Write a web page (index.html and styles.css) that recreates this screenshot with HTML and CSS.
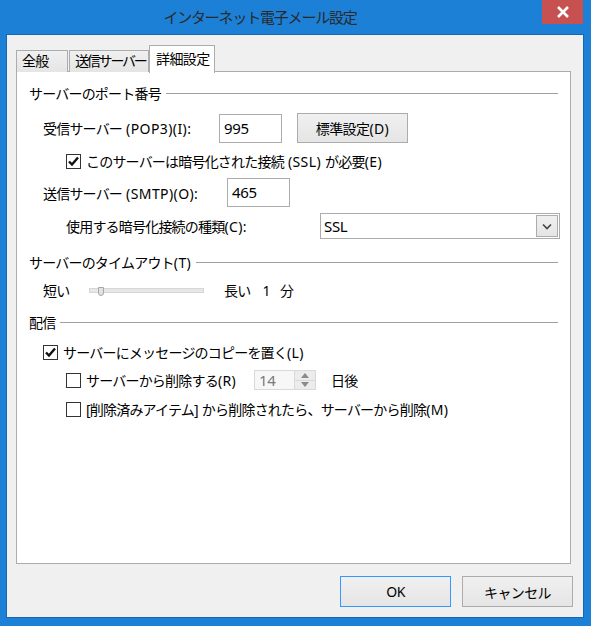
FILE: index.html
```html
<!DOCTYPE html>
<html lang="ja">
<head>
    <meta charset="UTF-8">
    <meta name="viewport" content="width=device-width, initial-scale=1.0">
    <title>インターネット電子メール設定</title>
    <link rel="stylesheet" href="styles.css">
</head>
<body>
    <div class="window">
        <div class="titlebar">
            <span class="title">インターネット電子メール設定</span>
            <span class="close">
                <svg width="14" height="12" viewBox="0 0 14 12"><path d="M2 1 L12 11 M12 1 L2 11" stroke="#fff" stroke-width="2.6"/></svg>
            </span>
        </div>
        <div class="client">
            <div class="tabs">
                <div class="tab tab-general">全般</div>
                <div class="tab tab-send">送信サーバー</div>
                <div class="tab tab-detail active">詳細設定</div>
            </div>
            <div class="panel">
                <div class="group-title g-port"><span>サーバーのポート番号</span></div>

                <div class="row r-pop">
                    <label class="lbl lbl-pop">受信サーバー<span class="en"> (POP3)(I):</span></label>
                    <div class="textbox tb-pop">995</div>
                    <button class="btn btn-default">標準設定<span class="en">(D)</span></button>
                </div>

                <div class="row r-ssl">
                    <span class="check checked">
                        <svg width="13" height="13" viewBox="0 0 13 13"><path d="M2 6.5 L5 9.5 L11 2.5" fill="none" stroke="#111" stroke-width="2.4"/></svg>
                    </span>
                    <span class="check-text">このサーバーは暗号化された接続<span class="en"> (SSL) </span>が必要<span class="en">(E)</span></span>
                </div>

                <div class="row r-smtp">
                    <label class="lbl lbl-smtp">送信サーバー<span class="en"> (SMTP)(O):</span></label>
                    <div class="textbox tb-smtp">465</div>
                </div>

                <div class="row r-enc">
                    <label class="lbl lbl-enc">使用する暗号化接続の種類<span class="en">(C):</span></label>
                    <div class="select">
                        <span class="select-value">SSL</span>
                        <span class="select-arrow">
                            <svg width="10" height="7" viewBox="0 0 10 7"><path d="M1 1.5 L5 5.5 L9 1.5" fill="none" stroke="#444" stroke-width="1.6"/></svg>
                        </span>
                    </div>
                </div>

                <div class="group-title g-timeout"><span>サーバーのタイムアウト<span class="en">(T)</span></span></div>

                <div class="row r-timeout">
                    <span class="lbl lbl-short">短い</span>
                    <div class="slider">
                        <span class="slider-thumb"></span>
                    </div>
                    <span class="lbl-long">長い</span>
                    <span class="lbl-min">1 分</span>
                </div>

                <div class="group-title g-deliver"><span>配信</span></div>

                <div class="row r-keep">
                    <span class="check checked">
                        <svg width="13" height="13" viewBox="0 0 13 13"><path d="M2 6.5 L5 9.5 L11 2.5" fill="none" stroke="#111" stroke-width="2.4"/></svg>
                    </span>
                    <span class="check-text">サーバーにメッセージのコピーを置く<span class="en">(L)</span></span>
                </div>

                <div class="row r-remove">
                    <span class="check"></span>
                    <span class="check-text lbl-remove">サーバーから削除する<span class="en">(R)</span></span>
                    <div class="spin">
                        <span class="spin-value">14</span>
                        <span class="spin-buttons">
                            <span class="spin-btn">
                                <svg width="8" height="5" viewBox="0 0 8 5"><path d="M0 5 L4 0 L8 5 Z" fill="#8a8a8a"/></svg>
                            </span>
                            <span class="spin-btn">
                                <svg width="8" height="5" viewBox="0 0 8 5"><path d="M0 0 L4 5 L8 0 Z" fill="#8a8a8a"/></svg>
                            </span>
                        </span>
                    </div>
                    <span class="lbl-days">日後</span>
                </div>

                <div class="row r-deleted">
                    <span class="check"></span>
                    <span class="check-text">[削除済みアイテム]<span class="en"> </span>から削除されたら、サーバーから削除<span class="en">(M)</span></span>
                </div>
            </div>
            <div class="footer">
                <button class="btn btn-dialog focused">OK</button>
                <button class="btn btn-dialog">キャンセル</button>
            </div>
        </div>
    </div>
</body>
</html>
```

FILE: styles.css
```css
* {
    box-sizing: border-box;
}

body {
    margin: 0;
    font-family: "Noto Sans", "Noto Sans CJK JP", sans-serif;
    font-size: 14px;
    letter-spacing: -0.8px;
    color: #000;
    background: #1b80d6;
}

.en {
    letter-spacing: 0.4px;
}

.window {
    width: 591px;
    height: 626px;
    padding: 0 7px 8px 6px;
    background: #1b80d6;
}

/* title bar */
.titlebar {
    position: relative;
    height: 34px;
    display: flex;
    justify-content: center;
    align-items: center;
    padding-right: 70px;
    padding-bottom: 1px;
}

.title {
    font-size: 15px;
    letter-spacing: -1.2px;
    color: #2a2a2a;
}

.close {
    position: absolute;
    top: 0;
    right: 1px;
    width: 41px;
    height: 24px;
    background: #c75050;
    display: flex;
    justify-content: center;
    align-items: center;
}

/* client area */
.client {
    height: 584px;
    background: #f0f0f0;
    border: 1px solid #1767b5;
    padding: 10px 10px 10px 9px;
}

.tabs {
    display: flex;
    align-items: flex-end;
    height: 27px;
}

.tab {
    height: 22px;
    border: 1px solid #acacac;
    border-bottom: none;
    background: linear-gradient(#f0f0f0, #e5e5e5);
    padding: 0 0 0 5px;
    line-height: 20px;
    white-space: nowrap;
    overflow: hidden;
    flex: none;
}

.tab-general {
    width: 52px;
    margin-right: 1px;
}

.tab-send {
    width: 80px;
    letter-spacing: -2.2px;
}

.tab-detail {
    width: 66px;
}

.tab.active {
    position: relative;
    z-index: 1;
    height: 28px;
    margin-bottom: -1px;
    background: #fff;
    padding-left: 6px;
    line-height: 26px;
    letter-spacing: -0.6px;
}

.panel {
    width: 555px;
    height: 493px;
    margin-top: -1px;
    background: #fff;
    border: 1px solid #acacac;
    padding: 11px 0 0 12px;
}

.group-title {
    display: flex;
    align-items: center;
    height: 20px;
    margin-right: 12px;
}

.group-title > span {
    white-space: nowrap;
}

.group-title::after {
    content: "";
    flex: 1;
    border-top: 1px solid #a0a0a0;
    margin-left: 5px;
}

.g-timeout {
    margin-top: 13px;
}

.g-deliver {
    margin-top: 11px;
}

.row {
    display: flex;
    align-items: center;
    white-space: nowrap;
}

.row > * {
    flex: none;
}

.r-pop {
    height: 30px;
    margin-top: 10px;
    padding-left: 14px;
}

.r-ssl {
    height: 22px;
    margin-top: 7px;
    padding-left: 37px;
}

.r-smtp {
    height: 29px;
    margin-top: 6px;
    padding-left: 14px;
}

.r-enc {
    height: 26px;
    margin-top: 6px;
    padding-left: 37px;
}

.r-timeout {
    height: 22px;
    margin-top: 7px;
    padding-left: 14px;
}

.r-keep {
    height: 22px;
    margin-top: 9px;
    padding-left: 14px;
}

.r-remove {
    height: 22px;
    margin-top: 6px;
    padding-left: 37px;
}

.r-deleted {
    height: 22px;
    margin-top: 7px;
    padding-left: 37px;
}

.lbl-pop {
    width: 176px;
}

.lbl-smtp {
    width: 184px;
}

.lbl-enc {
    width: 254px;
}

.textbox {
    width: 63px;
    height: 29px;
    border: 1px solid #acacac;
    background: #fff;
    padding-left: 4px;
    line-height: 26px;
    font-size: 15px;
    letter-spacing: -0.3px;
}

.btn {
    font-family: inherit;
    font-size: 14px;
    letter-spacing: -0.6px;
    color: #000;
    border: 1px solid #acacac;
    background: linear-gradient(#f0f0f0, #e5e5e5);
    padding: 0;
}

.btn-default {
    width: 111px;
    height: 30px;
    margin-left: 15px;
}

/* checkboxes */
.check {
    width: 15px;
    height: 15px;
    border: 1px solid #333;
    background: #fff;
    display: flex;
    justify-content: center;
    align-items: center;
}

.check-text {
    margin-left: 5px;
}

/* combo box */
.select {
    width: 240px;
    height: 26px;
    border: 1px solid #acacac;
    background: #fff;
    display: flex;
    align-items: center;
    justify-content: space-between;
    padding: 0 1px 0 3px;
}

.select-value {
    font-size: 15px;
    letter-spacing: -0.3px;
}

.select-arrow {
    width: 22px;
    height: 22px;
    border: 1px solid #acacac;
    background: linear-gradient(#f0f0f0, #e5e5e5);
    display: flex;
    justify-content: center;
    align-items: center;
}

/* slider */
.lbl-short {
    width: 46px;
}

.slider {
    position: relative;
    width: 115px;
    height: 5px;
    background: #e7e7e7;
    border: 1px solid #d6d6d6;
}

.slider-thumb {
    position: absolute;
    left: 8px;
    top: -2px;
    width: 6px;
    height: 9px;
    background: #e2e2e2;
    border: 1px solid #a8a8a8;
    border-radius: 0 0 3px 3px;
}

.lbl-long {
    margin-left: 20px;
}

.lbl-min {
    margin-left: 12px;
    letter-spacing: 3px;
}

/* spin box */
.lbl-remove {
    width: 168px;
}

.spin {
    width: 62px;
    height: 20px;
    border: 1px solid #d9d9d9;
    background: #f7f7f7;
    display: flex;
    justify-content: space-between;
}

.spin-value {
    padding-left: 4px;
    line-height: 18px;
    font-size: 15px;
    letter-spacing: -0.3px;
    color: #7a7a7a;
}

.spin-buttons {
    width: 21px;
    display: flex;
    flex-direction: column;
    border-left: 1px solid #d9d9d9;
}

.spin-btn {
    flex: 1;
    display: flex;
    justify-content: center;
    align-items: center;
    background: #ececec;
}

.spin-btn + .spin-btn {
    border-top: 1px solid #d9d9d9;
}

.lbl-days {
    margin-left: 15px;
}

/* dialog buttons */
.footer {
    display: flex;
    justify-content: flex-end;
    gap: 11px;
    margin-top: 12px;
}

.btn-dialog {
    width: 111px;
    height: 31px;
}

.btn-dialog.focused {
    border-color: #3399ff;
}
```
